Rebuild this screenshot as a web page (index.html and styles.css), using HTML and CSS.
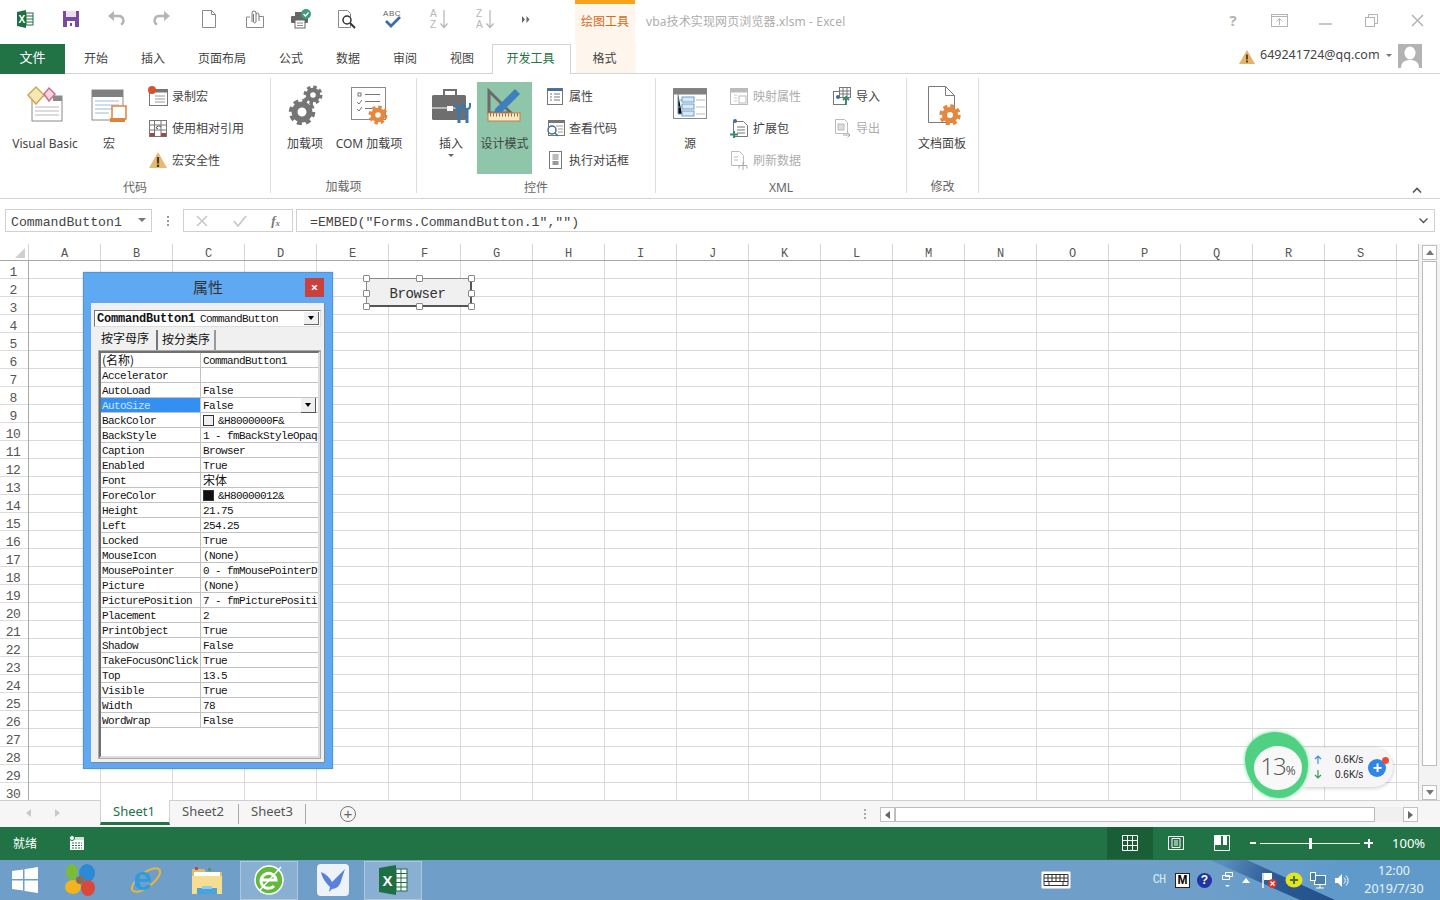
FILE: index.html
```html
<!DOCTYPE html>
<html lang="zh">
<head>
<meta charset="utf-8">
<title>vba技术实现网页浏览器.xlsm - Excel</title>
<link rel="stylesheet" href="styles.css">
</head>
<body>
<div class="app">
  <header class="titlebar">
    <div class="qat">
      <span class="qat-btn"><svg width="20" height="20" viewBox="0 0 20 20"><path fill="#1e6f42" d="M2 3l9-2v18l-9-2z"/><rect x="11" y="4" width="7" height="12" fill="#fff" stroke="#1e6f42"/><path stroke="#1e6f42" d="M11 7h7M11 10h7M11 13h7"/><text x="3.500" y="13.500" class="svg-x" font-size="10">X</text></svg></span>
      <span class="qat-btn"><svg width="18" height="18" viewBox="0 0 18 18"><path fill="#7b4a9e" d="M1 1h16v16H1z"/><rect x="4" y="1" width="10" height="6" fill="#e8e0ee"/><rect x="5" y="11" width="8" height="6" fill="#fff"/><rect x="8" y="13" width="2" height="3" fill="#7b4a9e"/></svg></span>
      <span class="qat-btn"><svg width="20" height="18" viewBox="0 0 20 18"><path fill="none" stroke="#b5b5b5" stroke-width="2.400" d="M4 6h8a4.500 4.500 0 0 1 2 8.500"/><path fill="#b5b5b5" d="M7 1v10L1 6z"/></svg></span>
      <span class="qat-btn qb-redo"><svg width="20" height="18" viewBox="0 0 20 18"><path fill="none" stroke="#b5b5b5" stroke-width="2.400" d="M16 6H8a4.500 4.500 0 0 0-2 8.500"/><path fill="#b5b5b5" d="M13 1v10l6-5z"/></svg></span>
      <span class="qat-btn"><svg width="18" height="20" viewBox="0 0 18 20"><path fill="#fff" stroke="#8a8a8a" d="M2.500 1.500h9l4 4v13h-13z"/><path fill="none" stroke="#8a8a8a" d="M11.500 1.500v4h4"/></svg></span>
      <span class="qat-btn"><svg width="20" height="20" viewBox="0 0 20 20"><path fill="none" stroke="#8a8a8a" d="M5 8H1.500v10.500h17V7.500H14"/><path fill="none" stroke="#777" d="M7 13V4a2 2 0 0 1 4 0v9a1.300 1.300 0 0 1-2.500 0V5M11 5a2 2 0 0 1 3 0v7"/></svg></span>
      <span class="qat-btn"><svg width="22" height="20" viewBox="0 0 22 20"><rect x="5" y="3" width="9" height="5" fill="#666"/><rect x="1" y="7" width="17" height="7" rx="1" fill="#666"/><rect x="5" y="11" width="10" height="8" fill="#fff" stroke="#666"/><path stroke="#888" d="M7 14h6M7 16.500h6"/><circle cx="16" cy="5" r="5" fill="#3f9c7d"/><path fill="none" stroke="#fff" stroke-width="1.300" d="M13.500 5l2 2 3-3.500"/></svg></span>
      <span class="qat-btn"><svg width="20" height="20" viewBox="0 0 20 20"><path fill="#fff" stroke="#8a8a8a" d="M1.500 1.500h9l3 3v14h-12z"/><circle cx="10" cy="11" r="4" fill="#fff" stroke="#333" stroke-width="1.500"/><path stroke="#333" stroke-width="2" d="M13 14l5 5"/></svg></span>
      <span class="qat-btn"><svg width="22" height="22" viewBox="0 0 22 22"><text x="1" y="8" class="svg-abc">ABC</text><path fill="none" stroke="#3c6ea5" stroke-width="2.800" d="M4 13l5 5 9-9"/></svg></span>
      <span class="qat-btn"><svg width="20" height="22" viewBox="0 0 20 22"><text x="1" y="9" class="svg-az">A</text><text x="1" y="20" class="svg-az">Z</text><path fill="none" stroke="#b5b5b5" stroke-width="1.200" d="M15 2v17M11.500 15.500l3.500 4 3.500-4"/></svg></span>
      <span class="qat-btn"><svg width="20" height="22" viewBox="0 0 20 22"><text x="1" y="9" class="svg-az">Z</text><text x="1" y="20" class="svg-az">A</text><path fill="none" stroke="#b5b5b5" stroke-width="1.200" d="M15 2v17M11.500 15.500l3.500 4 3.500-4"/></svg></span>
      <span class="qat-more"><svg width="8" height="7" viewBox="0 0 8 7"><path fill="#666" d="M0 0l3 3.500L0 7zM4.500 0l3 3.500-3 3.500z"/></svg></span>
    </div>
    <div class="ctx-label">绘图工具</div>
    <div class="doc-title">vba技术实现网页浏览器.xlsm - Excel</div>
    <div class="win-ctrls">
      <span class="win-btn help">?</span>
      <span class="win-btn"><svg width="17" height="13" viewBox="0 0 17 13"><rect x=".5" y=".5" width="16" height="12" fill="none" stroke="#b4b4b4"/><path stroke="#b4b4b4" d="M.5 2.500h16"/><path fill="none" stroke="#b4b4b4" d="M8.500 11V5M5.500 7.500l3-3 3 3"/></svg></span>
      <span class="win-btn"><svg width="13" height="12" viewBox="0 0 13 12"><path stroke="#b4b4b4" stroke-width="1.500" d="M0 10h13"/></svg></span>
      <span class="win-btn"><svg width="13" height="13" viewBox="0 0 13 13"><rect x=".5" y="3.500" width="9" height="9" fill="#fff" stroke="#b4b4b4"/><path fill="none" stroke="#b4b4b4" d="M3.500 3.500v-3h9v9h-3"/></svg></span>
      <span class="win-btn"><svg width="13" height="13" viewBox="0 0 13 13"><path stroke="#b4b4b4" stroke-width="1.500" d="M1 1l11 11M12 1L1 12"/></svg></span>
    </div>
  </header>

  <nav class="tabs">
    <div class="tab tab-file">文件</div>
    <div class="tab w62">开始</div>
    <div class="tab w52">插入</div>
    <div class="tab w86">页面布局</div>
    <div class="tab w52">公式</div>
    <div class="tab w62">数据</div>
    <div class="tab w52">审阅</div>
    <div class="tab w62">视图</div>
    <div class="tab tab-active">开发工具</div>
    <div class="tab tab-ctx">格式</div>
    <div class="account">
      <svg width="16" height="14" viewBox="0 0 16 14"><path fill="#e5b26e" d="M8 0l8 14H0z"/><path stroke="#4a3a20" stroke-width="1.800" d="M8 4.500v5M8 10.500v2"/></svg>
      <span class="email">649241724@qq.com</span>
      <span class="acct-arrow"></span>
      <svg class="avatar" width="24" height="24" viewBox="0 0 24 24"><rect width="24" height="24" fill="#b3b3b3"/><ellipse cx="12" cy="9" rx="5.500" ry="6.500" fill="#fff"/><path fill="#fff" d="M3 24c0-6 4-8 9-8s9 2 9 8z"/></svg>
    </div>
  </nav>

  <section class="ribbon">
    <div class="group g1">
      <div class="group-body">
        <div class="big w78">
          <svg class="big-ico" width="40" height="40" viewBox="0 0 40 40"><rect x="7" y="11" width="30" height="25" fill="#fff" stroke="#8a8a8a"/><rect x="28" y="11" width="9" height="5" fill="#8a8a8a"/><path stroke="#b9b9b9" d="M10 22h24M10 26h24M10 30h24"/><path fill="#f7e7b4" stroke="#c9ab5b" stroke-width="1.500" d="M11 2l8 8-8 9-8-9z"/><path fill="#f6d4e0" stroke="#c96f94" stroke-width="1.500" d="M24 3l6 6-6 7-5-7z"/></svg>
          <span class="big-label">Visual Basic</span>
        </div>
        <div class="big w50">
          <svg class="big-ico" width="40" height="40" viewBox="0 0 40 40"><rect x="3" y="5" width="31" height="30" fill="#fff" stroke="#8a8a8a"/><rect x="3" y="5" width="31" height="7" fill="#808080"/><path stroke="#9cbcd6" d="M6 16h24M6 20h24M6 24h24M6 28h14"/><path fill="#fff" stroke="#e0823c" stroke-width="1.500" d="M23 21h14v13H23z"/><rect x="21" y="33" width="15" height="4" fill="#e0823c"/></svg>
          <span class="big-label">宏</span>
        </div>
        <div class="small-col ml14">
          <div class="small"><svg width="20" height="20" viewBox="0 0 20 20"><rect x="1.500" y="3.500" width="18" height="16" fill="#fff" stroke="#777"/><rect x="1.500" y="3.500" width="18" height="3" fill="#777"/><path stroke="#999" d="M7 10h10M7 13h10M7 16h10"/><circle cx="4" cy="4" r="4" fill="#d8532b"/></svg><span>录制宏</span></div>
          <div class="small"><svg width="20" height="20" viewBox="0 0 20 20"><rect x="1.500" y="2.500" width="17" height="16" fill="#fff" stroke="#777"/><path stroke="#777" d="M1.500 7h17M1.500 12h17M6.500 2.500v16M13 2.500v16"/><rect x="2" y="15" width="5" height="3.500" fill="#9c4a4a"/><rect x="13" y="15" width="5" height="3.500" fill="#9c4a4a"/><path fill="none" stroke="#555" d="M13 9a3 3 0 0 0-5 1l2 .5"/></svg><span>使用相对引用</span></div>
          <div class="small"><svg width="20" height="18" viewBox="0 0 20 18"><path fill="#e9b874" d="M10 1l9 16H1z"/><path stroke="#4a3a20" stroke-width="2.200" d="M10 6v6.500M10 13.500v2.500"/></svg><span>宏安全性</span></div>
        </div>
      </div>
      <div class="group-label">代码</div>
    </div>

    <div class="group g2">
      <div class="group-body">
        <div class="big w48">
          <svg class="big-ico" width="40" height="40" viewBox="0 0 40 40"><circle cx="17" cy="27" r="7.500" fill="none" stroke="#757575" stroke-width="6"/><circle cx="17" cy="27" r="11.500" fill="none" stroke="#757575" stroke-width="3.500" stroke-dasharray="5 4.030"/><circle cx="28" cy="10" r="5" fill="none" stroke="#757575" stroke-width="4.500"/><circle cx="28" cy="10" r="8" fill="none" stroke="#757575" stroke-width="3" stroke-dasharray="3.500 2.780"/></svg>
          <span class="big-label">加载项</span>
        </div>
        <div class="big w80">
          <svg class="big-ico" width="40" height="40" viewBox="0 0 40 40"><rect x="2.500" y="2.500" width="34" height="32" fill="#fff" stroke="#8a8a8a"/><rect x="9" y="8" width="3" height="3" fill="#fff" stroke="#777"/><path stroke="#777" d="M16 9.500h15M16 16.500h15M16 23.500h8"/><path fill="none" stroke="#777" d="M8 17l2 2 3-4M8 24l2 2 3-4"/><circle cx="29" cy="30" r="5" fill="#fff" stroke="#e5873d" stroke-width="4.500"/><circle cx="29" cy="30" r="8" fill="none" stroke="#e5873d" stroke-width="3" stroke-dasharray="3.500 2.780"/></svg>
          <span class="big-label">COM 加载项</span>
        </div>
      </div>
      <div class="group-label">加载项</div>
    </div>

    <div class="group g3">
      <div class="group-body">
        <div class="big w52">
          <svg class="big-ico" width="40" height="40" viewBox="0 0 40 40"><path fill="none" stroke="#6e6e6e" stroke-width="2" d="M13 10V5h12v5"/><rect x="1" y="10" width="34" height="25" rx="1.500" fill="#6e6e6e"/><rect x="16" y="21" width="6" height="5" fill="#fff"/><path stroke="#fff" d="M1 23h15M22 23h6"/><path stroke="#3a78ad" stroke-width="3" d="M28 22v16M36 24v14"/><path fill="none" stroke="#3a78ad" stroke-width="2" d="M25 18v3a3 3 0 0 0 6 0v-3M33 18v3a3 3 0 0 0 6 0v-3"/></svg>
          <span class="big-label">插入</span>
          <span class="caret"></span>
        </div>
        <div class="big w55 active">
          <svg class="big-ico" width="40" height="40" viewBox="0 0 40 40"><path fill="none" stroke="#6b6b6b" stroke-width="3" d="M4 6v22h22z"/><path fill="#3d7fc0" d="M10 24L30 4l5 5-20 20-6 2z"/><rect x="3" y="28" width="32" height="8" fill="#f4e9c8" stroke="#c97f3c"/><path stroke="#9a6a30" stroke-dasharray="1 2" stroke-width="3" d="M5 30h28"/></svg>
          <span class="big-label">设计模式</span>
        </div>
        <div class="small-col ml14">
          <div class="small sm"><svg width="18" height="18" viewBox="0 0 18 18"><rect x="1.500" y="1.500" width="15" height="16" fill="#fff" stroke="#777"/><rect x="1.500" y="1.500" width="15" height="2.500" fill="#3c6ea5"/><path stroke="#777" d="M4 7h2M8 7h6M4 10h2M8 10h6M4 13h2M8 13h6"/></svg><span>属性</span></div>
          <div class="small sm-tight"><svg width="20" height="18" viewBox="0 0 20 18"><rect x="2.500" y="1.500" width="16" height="15" fill="#fff" stroke="#777"/><rect x="2.500" y="1.500" width="16" height="2.500" fill="#777"/><path stroke="#999" d="M10 7h7M12 10h5M12 13h5"/><circle cx="6" cy="11" r="4" fill="#fff" stroke="#3f6d8f" stroke-width="1.500"/><path stroke="#3f6d8f" stroke-width="1.500" d="M9 14l3 3"/></svg><span>查看代码</span></div>
          <div class="small sm"><svg width="18" height="20" viewBox="0 0 18 20"><rect x="3.500" y="1.500" width="12" height="17" fill="#fff" stroke="#777"/><path stroke="#777" d="M6.500 5h6M6.500 7h6M6.500 9h6"/><rect x="6.500" y="11" width="6" height="4" fill="#999"/></svg><span>执行对话框</span></div>
        </div>
      </div>
      <div class="group-label">控件</div>
    </div>

    <div class="group g4">
      <div class="group-body">
        <div class="big w48">
          <svg class="big-ico" width="40" height="40" viewBox="0 0 40 40"><rect x="3.500" y="3.500" width="33" height="30" fill="#fff" stroke="#8a8a8a"/><rect x="3.500" y="3.500" width="33" height="6" fill="#808080"/><path stroke="#6a9ec7" d="M8 9v20h4M8 15h4M8 22h4"/><rect x="12" y="12" width="12" height="5" fill="#d9e8f3" stroke="#6a9ec7"/><rect x="12" y="19" width="12" height="5" fill="#d9e8f3" stroke="#6a9ec7"/><rect x="12" y="26" width="12" height="5" fill="#d9e8f3" stroke="#6a9ec7"/><path stroke="#bbb" d="M26 15h9M26 22h9M26 29h9"/></svg>
          <span class="big-label">源</span>
        </div>
        <div class="small-col ml15 w103">
          <div class="small off"><svg width="20" height="20" viewBox="0 0 20 20"><rect x="1.500" y="2.500" width="17" height="16" fill="#fff" stroke="#bbb"/><rect x="1.500" y="2.500" width="17" height="4" fill="#bbb"/><path stroke="#ccc" d="M5 9h3M5 12h3M5 15h3"/><rect x="10" y="10" width="7" height="7" fill="#fff" stroke="#bbb"/></svg><span>映射属性</span></div>
          <div class="small"><svg width="20" height="20" viewBox="0 0 20 20"><path fill="#fff" stroke="#777" d="M4.500 3.500h10l4 4v11h-14z"/><path stroke="#777" d="M8 9h8M8 12h8M8 15h8"/><circle cx="6" cy="3" r="2" fill="#3c6ea5"/><path stroke="#3d8a6a" stroke-width="2" d="M5 13v7M1 16.500h8"/></svg><span>扩展包</span></div>
          <div class="small off"><svg width="20" height="20" viewBox="0 0 20 20"><path fill="#fff" stroke="#bbb" d="M2.500 1.500h8l4 4v10h-12z"/><path stroke="#bbb" d="M5 7h4M5 10h4"/><path stroke="#aaa" d="M14 12v8M10 15.500h8M10 15.500v3M18 15.500v3"/></svg><span>刷新数据</span></div>
        </div>
        <div class="small-col">
          <div class="small"><svg width="20" height="20" viewBox="0 0 20 20"><rect x="1.500" y="5.500" width="13" height="13" fill="#fff" stroke="#777"/><rect x="7.500" y="1.500" width="11" height="10" fill="#fff" stroke="#777"/><path stroke="#777" d="M7.500 5h11M7.500 8h11M11 1.500v10M15 1.500v10"/><circle cx="6" cy="11" r="2" fill="#3c6ea5"/><path stroke="#3d8a6a" stroke-width="2" fill="none" d="M14 19v-8M11 14l3-3 3 3"/></svg><span>导入</span></div>
          <div class="small off"><svg width="20" height="20" viewBox="0 0 20 20"><path fill="#fff" stroke="#bbb" d="M3.500 1.500h9l3 3v11h-12z"/><rect x="6" y="6" width="6" height="6" fill="#ddd" stroke="#bbb"/><path stroke="#aaa" fill="none" d="M11 17h7M15.500 14.500L18 17l-2.500 2.500"/></svg><span>导出</span></div>
        </div>
      </div>
      <div class="group-label">XML</div>
    </div>

    <div class="group g5">
      <div class="group-body">
        <div class="big w56">
          <svg class="big-ico" width="40" height="40" viewBox="0 0 40 40"><path fill="#fff" stroke="#7a7a7a" d="M6.500 1.500h17l9 9v27h-26z"/><path fill="none" stroke="#7a7a7a" d="M23.500 1.500v9h9"/><circle cx="28" cy="30" r="5.500" fill="#fff" stroke="#e5873d" stroke-width="5"/><circle cx="28" cy="30" r="9" fill="none" stroke="#e5873d" stroke-width="3.500" stroke-dasharray="4 3.070"/></svg>
          <span class="big-label">文档面板</span>
        </div>
      </div>
      <div class="group-label">修改</div>
    </div>

    <div class="collapse"><svg width="10" height="6" viewBox="0 0 10 6"><path fill="none" stroke="#555" stroke-width="1.600" d="M1 5.500l4-4 4 4"/></svg></div>
  </section>

  <section class="formula">
    <div class="namebox"><span>CommandButton1</span><i class="down-tri"></i></div>
    <div class="fdots"></div>
    <div class="fxbox">
      <svg width="12" height="12" viewBox="0 0 12 12"><path stroke="#c8c8c8" stroke-width="1.600" d="M1 1l10 10M11 1L1 11"/></svg>
      <svg width="14" height="12" viewBox="0 0 14 12"><path fill="none" stroke="#c8c8c8" stroke-width="1.800" d="M1 6l4 5 8-10"/></svg>
      <span class="fx">f<sub>x</sub></span>
    </div>
    <div class="fbox"><span>=EMBED("Forms.CommandButton.1","")</span><svg width="9" height="6" viewBox="0 0 9 6"><path fill="none" stroke="#555" stroke-width="1.400" d="M.5 .5l4 4 4-4"/></svg></div>
  </section>

  <section class="sheet">
    <div class="sheet-main">
      <div class="col-head">
        <div class="corner"><i></i></div>
        <div class="col">A</div><div class="col">B</div><div class="col">C</div><div class="col">D</div><div class="col">E</div><div class="col">F</div><div class="col">G</div><div class="col">H</div><div class="col">I</div><div class="col">J</div><div class="col">K</div><div class="col">L</div><div class="col">M</div><div class="col">N</div><div class="col">O</div><div class="col">P</div><div class="col">Q</div><div class="col">R</div><div class="col">S</div>
      </div>
      <div class="sheet-body">
        <div class="row-head">
          <div>1</div><div>2</div><div>3</div><div>4</div><div>5</div><div>6</div><div>7</div><div>8</div><div>9</div><div>10</div><div>11</div><div>12</div><div>13</div><div>14</div><div>15</div><div>16</div><div>17</div><div>18</div><div>19</div><div>20</div><div>21</div><div>22</div><div>23</div><div>24</div><div>25</div><div>26</div><div>27</div><div>28</div><div>29</div><div>30</div>
        </div>
        <div class="cells"></div>
      </div>
    </div>
    <div class="vscroll">
      <div class="sb-btn"><i class="tri-up"></i></div>
      <div class="vthumb"></div>
      <div class="sb-btn"><i class="tri-down"></i></div>
    </div>

    <div class="ctl-button">
      <span>Browser</span>
      <i class="hd h-tl"></i><i class="hd h-tc"></i><i class="hd h-tr"></i><i class="hd h-ml"></i><i class="hd h-mr"></i><i class="hd h-bl"></i><i class="hd h-bc"></i><i class="hd h-br"></i>
    </div>

    <div class="props">
      <div class="props-title"><span>属性</span><b class="props-close">×</b></div>
      <div class="props-inner">
        <div class="combo"><b>CommandButton1</b><span>CommandButton</span><i class="combo-btn"><i class="tri-down blk"></i></i></div>
        <div class="prop-tabs"><span class="pt-on">按字母序</span><span class="pt-off">按分类序</span></div>
        <div class="prop-table">
          <div class="pr"><div class="pn cjk">(名称)</div><div class="pv">CommandButton1</div></div>
          <div class="pr"><div class="pn">Accelerator</div><div class="pv"></div></div>
          <div class="pr"><div class="pn">AutoLoad</div><div class="pv">False</div></div>
          <div class="pr"><div class="pn sel">AutoSize</div><div class="pv">False<i class="pv-btn"><i class="tri-down blk"></i></i></div></div>
          <div class="pr"><div class="pn">BackColor</div><div class="pv"><i class="swatch"></i>&amp;H8000000F&amp;</div></div>
          <div class="pr"><div class="pn">BackStyle</div><div class="pv">1 - fmBackStyleOpaq</div></div>
          <div class="pr"><div class="pn">Caption</div><div class="pv">Browser</div></div>
          <div class="pr"><div class="pn">Enabled</div><div class="pv">True</div></div>
          <div class="pr"><div class="pn">Font</div><div class="pv cjk">宋体</div></div>
          <div class="pr"><div class="pn">ForeColor</div><div class="pv"><i class="swatch dark"></i>&amp;H80000012&amp;</div></div>
          <div class="pr"><div class="pn">Height</div><div class="pv">21.75</div></div>
          <div class="pr"><div class="pn">Left</div><div class="pv">254.25</div></div>
          <div class="pr"><div class="pn">Locked</div><div class="pv">True</div></div>
          <div class="pr"><div class="pn">MouseIcon</div><div class="pv">(None)</div></div>
          <div class="pr"><div class="pn">MousePointer</div><div class="pv">0 - fmMousePointerD</div></div>
          <div class="pr"><div class="pn">Picture</div><div class="pv">(None)</div></div>
          <div class="pr"><div class="pn">PicturePosition</div><div class="pv">7 - fmPicturePositi</div></div>
          <div class="pr"><div class="pn">Placement</div><div class="pv">2</div></div>
          <div class="pr"><div class="pn">PrintObject</div><div class="pv">True</div></div>
          <div class="pr"><div class="pn">Shadow</div><div class="pv">False</div></div>
          <div class="pr"><div class="pn">TakeFocusOnClick</div><div class="pv">True</div></div>
          <div class="pr"><div class="pn">Top</div><div class="pv">13.5</div></div>
          <div class="pr"><div class="pn">Visible</div><div class="pv">True</div></div>
          <div class="pr"><div class="pn">Width</div><div class="pv">78</div></div>
          <div class="pr"><div class="pn">WordWrap</div><div class="pv">False</div></div>
        </div>
      </div>
    </div>

    <div class="net-widget">
      <div class="net-pill">
        <div class="net-rows">
          <div class="net-row"><svg width="8" height="9" viewBox="0 0 8 9"><path fill="none" stroke="#3f8fe0" stroke-width="1.200" d="M4 9V1M1 4l3-3 3 3"/></svg><span>0.6K/s</span></div>
          <div class="net-row"><svg width="8" height="9" viewBox="0 0 8 9"><path fill="none" stroke="#2f9e5f" stroke-width="1.200" d="M4 0v8M1 5l3 3 3-3"/></svg><span>0.6K/s</span></div>
        </div>
        <div class="net-plus">+<i></i></div>
      </div>
      <div class="net-ring"><div class="net-core"><span>13</span><small>%</small></div></div>
    </div>
  </section>

  <section class="sheetbar">
    <div class="nav-arrows"><i class="tri-left lt"></i><i class="tri-right lt"></i></div>
    <div class="stab stab-on">Sheet1</div>
    <div class="stab s2">Sheet2</div>
    <div class="stab s3">Sheet3</div>
    <div class="add-sheet">+</div>
    <div class="bar-dots"></div>
    <div class="hscroll">
      <div class="sb-btn"><i class="tri-left"></i></div>
      <div class="hthumb"></div>
      <div class="sb-gap"></div>
      <div class="sb-btn"><i class="tri-right"></i></div>
    </div>
  </section>

  <footer class="status">
    <span class="ready">就绪</span>
    <svg class="macro" width="16" height="16" viewBox="0 0 16 16"><rect x="1" y="2" width="14" height="13" fill="#fff"/><rect x="1" y="2" width="14" height="3" fill="#cfe2d6"/><path stroke="#217346" d="M3 8h10M3 10.500h10M3 13h10" stroke-dasharray="2 1"/><circle cx="3" cy="3" r="2.500" fill="#fff" stroke="#217346"/></svg>
    <div class="views">
      <div class="view view-on"><svg width="16" height="16" viewBox="0 0 16 16"><path fill="none" stroke="#fff" d="M.5 .5h15v15H.5zM.5 5.500h15M.5 10.500h15M5.500 .5v15M10.500 .5v15"/></svg></div>
      <div class="view"><svg width="16" height="14" viewBox="0 0 16 14"><path fill="none" stroke="#fff" d="M.5 .5h15v13H.5z"/><path fill="none" stroke="#fff" d="M4 2.500h8v9H4zM6 5h4M6 7h4M6 9h4"/></svg></div>
      <div class="view"><svg width="16" height="16" viewBox="0 0 16 16"><path fill="none" stroke="#fff" d="M.5 .5h15v15H.5z"/><path fill="#fff" d="M1 1h6v9H1zM9 1h4v9H9z"/></svg></div>
    </div>
    <div class="zoom">
      <i class="z-minus"></i>
      <div class="z-track"><i></i></div>
      <i class="z-plus"></i>
      <span>100%</span>
    </div>
  </footer>

  <footer class="taskbar">
    <div class="task-wedge"></div>
    <div class="task-left">
      <span class="ti"><svg width="28" height="28" viewBox="0 0 28 28"><path fill="#fff" d="M1 5l11-1.600V13H1zM13.500 3.200L27 1v12H13.500zM1 14.500h11v10L1 23zM13.500 14.500H27V27l-13.500-2z"/></svg></span>
      <span class="ti"><svg width="34" height="34" viewBox="0 0 34 34"><ellipse cx="9" cy="9" rx="6" ry="8" fill="#7cba3c"/><ellipse cx="24" cy="10" rx="8" ry="9" fill="#2b8ad6"/><ellipse cx="10" cy="24" rx="8" ry="7" fill="#f0b51e"/><ellipse cx="25" cy="25" rx="7" ry="8" fill="#d9483b"/><circle cx="17" cy="17" r="4" fill="#8d6a52"/></svg></span>
      <span class="ti"><svg class="ie-ico" width="34" height="34" viewBox="0 0 34 34"><ellipse cx="17" cy="17" rx="17" ry="7" transform="rotate(-38 17 17)" fill="none" stroke="#e8b53a" stroke-width="2"/><text x="4" y="27" class="svg-ie">e</text></svg></span>
      <span class="ti"><svg width="34" height="32" viewBox="0 0 34 32"><path fill="#dcbc6c" d="M2 5h12l2 3h16v22H2z"/><path fill="#fff" d="M4 8h26v6H4z"/><path fill="#f6dd92" d="M2 12h30v18H2z"/><rect x="5" y="3" width="3" height="3" fill="#c04a3a"/><rect x="18" y="4" width="3" height="3" fill="#5a9a4a"/><path fill="#4aa3dc" d="M7 24h20v6H7z"/><rect x="12" y="22" width="10" height="3" fill="#8fd0ef"/></svg></span>
      <span class="ti ti-on"><svg width="32" height="32" viewBox="0 0 32 32"><circle cx="16" cy="16" r="14" fill="#62b93a" stroke="#fff" stroke-width="1.500"/><path fill="none" stroke="#fff" stroke-width="3" d="M8 16h15a7.500 7.500 0 1 0-2 6"/><path fill="none" stroke="#fff" stroke-width="1.500" d="M7 26L28 3"/></svg></span>
      <span class="ti"><svg width="32" height="32" viewBox="0 0 32 32"><rect width="32" height="32" rx="4" fill="#eef3fb"/><path fill="#5a7fdc" d="M4 8c5 2 9 6 11 10l13-13-4 12c-1 5-5 8-9 8l-3 3 1-5C9 19 5 14 4 8z"/></svg></span>
      <span class="ti ti-on"><svg width="30" height="32" viewBox="0 0 30 32"><path fill="#1e6f42" d="M1 4l17-3v30L1 28z"/><rect x="18" y="5" width="11" height="22" fill="#fff" stroke="#1e6f42"/><path stroke="#1e6f42" d="M18 9.500h11M18 14h11M18 18.500h11M18 23h11M23 5v22"/><text x="4.500" y="22" class="svg-x" font-size="15">X</text></svg></span>
    </div>
    <div class="tray">
      <svg class="kbd" width="30" height="18" viewBox="0 0 30 18"><rect x=".5" y=".5" width="29" height="17" rx="1" fill="#fff"/><path fill="none" stroke="#333" d="M3 3.500h24v11H3zM3 7h24M3 10.500h24M7 3.500v7M11 3.500v7M15 3.500v7M19 3.500v7M23 3.500v7M8 10.500v4M22 10.500v4"/></svg>
      <span class="ch">CH</span>
      <span class="ime-m">M</span>
      <span class="ime-q">?</span>
      <svg class="t-restore" width="11" height="16" viewBox="0 0 11 16"><path fill="none" stroke="#fff" d="M3.500 .5h7v4h-7zM.5 3.500h7v4h-7z"/><path fill="#fff" d="M3 13h5l-2.500 2z"/></svg>
      <i class="t-up"></i>
      <svg class="t-flag" width="17" height="17" viewBox="0 0 17 17"><path stroke="#fff" stroke-width="1.500" d="M2 1v15"/><path fill="#fff" d="M3 1h8v7H3z"/><circle cx="11.500" cy="11.500" r="4.500" fill="#d9342c"/><path stroke="#fff" stroke-width="1.200" d="M9.500 9.500l4 4M13.500 9.500l-4 4"/></svg>
      <svg class="t-plus" width="18" height="16" viewBox="0 0 18 16"><ellipse cx="9" cy="8" rx="8.500" ry="7.500" fill="#e7e31e"/><path stroke="#3a7a24" stroke-width="2" d="M9 4v8M5 8h8"/></svg>
      <svg class="t-net" width="16" height="17" viewBox="0 0 16 17"><rect x="4.500" y="3.500" width="11" height="9" fill="#4a7fa8" stroke="#fff"/><rect x=".5" y=".5" width="5" height="8" fill="#4a7fa8" stroke="#fff"/><path stroke="#fff" d="M10 13v3M6 16h8"/></svg>
      <svg class="t-vol" width="15" height="15" viewBox="0 0 15 15"><path fill="#fff" d="M1 5h3l4-4v13l-4-4H1z"/><path fill="none" stroke="#fff" d="M10 4.500a4 4 0 0 1 0 6M12 2.500a7 7 0 0 1 0 10"/></svg>
      <div class="clock"><span>12:00</span><span>2019/7/30</span></div>
    </div>
  </footer>
</div>
</body>
</html>
```
FILE: styles.css
```css
* { box-sizing: border-box; }
html, body { margin: 0; padding: 0; }
body {
  width: 1440px;
  height: 900px;
  overflow: hidden;
  background: #fff;
  color: #444;
  font-family: "Noto Sans", "Noto Sans CJK SC", sans-serif;
  font-size: 12px;
}
i { font-style: normal; display: block; }
svg { display: block; flex: none; }

.app { width: 1440px; height: 900px; display: flex; flex-direction: column; }

.svg-x { font-family: "Liberation Sans", sans-serif; font-weight: 700; fill: #fff; }
.svg-abc { font-family: "Liberation Sans", sans-serif; font-size: 8px; letter-spacing: .6px; fill: #666; }
.svg-az { font-family: "Liberation Sans", sans-serif; font-size: 10px; fill: #b5b5b5; }
.svg-ie { font-family: "Liberation Sans", sans-serif; font-size: 34px; font-weight: 700; fill: #2f9be0; }
.ie-ico { overflow: visible; }

/* title bar */
.titlebar { height: 44px; display: flex; flex: none; }
.qat { width: 575px; display: flex; align-items: flex-start; padding: 9px 0 0 2px; }
.qat-btn { width: 46px; height: 20px; display: flex; align-items: center; justify-content: center; }
.qb-redo { margin-left: -2px; margin-right: 2px; }
.qat-more { margin: 7px 0 0 14px; width: 8px; }
.ctx-label {
  width: 60px; border-top: 4px solid #f9a21b; background: #fef6ec;
  color: #d9691f; text-align: center; line-height: 36px; font-size: 12px;
}
.doc-title { padding: 13px 0 0 11px; color: #adadad; font-size: 12px; line-height: 18px; letter-spacing: .12px; }
.win-ctrls { margin-left: auto; width: 230px; display: flex; }
.win-btn { width: 46px; height: 40px; display: flex; align-items: center; justify-content: center; }
.win-btn.help { color: #b4b4b4; font-size: 15px; font-weight: 700; }

/* tabs */
.tabs { height: 30px; display: flex; flex: none; border-bottom: 1px solid #d4d4d4; }
.tab { height: 30px; line-height: 29px; text-align: center; color: #444; font-size: 12px; }
.tab-file { width: 65px; background: #217346; color: #fff; font-size: 13px; line-height: 27px; }
.w62 { width: 62px; } .w52 { width: 52px; } .w86 { width: 86px; }
.tab-active { width: 79px; margin-left: -1px; padding-right: 2px; color: #217346; background: #fff; border: 1px solid #d4d4d4; border-bottom: 0; line-height: 28px; }
.tab-ctx { width: 60px; margin-left: 5px; padding-right: 3px; background: #fef6ec; height: 29px; }
.account { margin-left: auto; width: 202px; display: flex; align-items: flex-start; }
.account > svg:first-child { margin: 6px 5px 0 1px; }
.email { font-size: 12.500px; line-height: 22px; color: #444; }
.acct-arrow { width: 0; height: 0; border: 3px solid transparent; border-top-color: #777; margin: 10px 6px 0 6px; }
.avatar { margin: 0; }

/* ribbon */
.ribbon { height: 125px; flex: none; display: flex; border-bottom: 1px solid #d4d4d4; position: relative; }
.group { height: 115px; margin-top: 4px; padding-top: 2px; border-right: 1px solid #dedede; display: flex; flex-direction: column; }
.g1 { width: 271px; padding-left: 6px; }
.g2 { width: 146px; padding-left: 10px; }
.g3 { width: 239px; padding-left: 8px; }
.g4 { width: 251px; padding-left: 10px; }
.g5 { width: 72px; padding-left: 7px; }
.group-body { height: 96px; display: flex; }
.group-label { padding-top: 6px; line-height: 12px; text-align: center; color: #666; margin-left: -6px; }
.g2 .group-label, .g4 .group-label { margin-left: -10px; }
.g3 .group-label { margin-left: -8px; }
.g5 .group-label { margin-left: -7px; }
.big { height: 92px; margin-top: 2px; display: flex; flex-direction: column; align-items: center; padding-top: 3px; }
.big-ico { margin-bottom: 10px; }
.big-label { line-height: 18px; color: #444; white-space: nowrap; }
.w78 { width: 78px; } .w50 { width: 50px; } .w48 { width: 48px; } .w80 { width: 80px; } .w55 { width: 55px; } .w56 { width: 56px; } .w103 { width: 103px; }
.active { background: #8fc6a9; }
.caret { width: 0; height: 0; border: 3px solid transparent; border-top-color: #666; margin-top: 1px; }
.small-col { display: flex; flex-direction: column; }
.ml14 { margin-left: 14px; } .ml15 { margin-left: 15px; }
.small { height: 32px; display: flex; align-items: center; gap: 4px; color: #444; white-space: nowrap; }
.small.sm { gap: 5px; }
.small.sm-tight { gap: 3px; }
.small.off { color: #adadad; }
.collapse { position: absolute; left: 1412px; top: 113px; }

/* formula bar */
.formula { height: 45px; flex: none; padding: 10px 5px 0 5px; display: flex; align-items: flex-start; }
.namebox { width: 147px; height: 23px; border: 1px solid #d0d0d0; display: flex; align-items: center; padding: 3px 5px 0; font-family: "Liberation Mono", monospace; font-size: 13.200px; color: #444; }
.down-tri { width: 0; height: 0; border: 4px solid transparent; border-top-color: #777; margin: 0 0 0 auto; }
.fdots { width: 2px; height: 10px; margin: 7px 14px 0 15px; background: repeating-linear-gradient(to bottom, #999 0 2px, transparent 2px 4px); }
.fxbox { width: 110px; height: 23px; border: 1px solid #d0d0d0; display: flex; align-items: center; justify-content: space-between; padding: 0 12px 0 12px; }
.fx { font-family: "Liberation Serif", serif; font-style: italic; font-weight: 700; font-size: 13px; color: #777; line-height: 14px; }
.fx sub { font-size: 9px; line-height: 0; vertical-align: -1px; }
.fbox { width: 1139px; height: 23px; margin-left: 3px; border: 1px solid #d0d0d0; display: flex; align-items: center; justify-content: space-between; padding: 3px 6px 0 13px; font-family: "Liberation Mono", monospace; font-size: 13.200px; color: #444; }
.fbox svg { margin-top: -3px; }

/* sheet */
.sheet { height: 556px; flex: none; display: flex; position: relative; overflow: hidden; }
.sheet-main { width: 1419px; flex: none; display: flex; flex-direction: column; border-right: 1px solid #c4c4c4; }
.col-head { height: 17px; flex: none; display: flex; border-bottom: 1px solid #a8a8a8; }
.corner { width: 29px; border-right: 1px solid #d4d4d4; position: relative; }
.corner i { position: absolute; right: 3px; bottom: 2px; border: 5px solid transparent; border-right-color: #d0d0d0; border-bottom-color: #d0d0d0; }
.col { width: 72px; border-right: 1px solid #d4d4d4; text-align: center; font-family: "Liberation Mono", monospace; font-size: 12px; line-height: 20px; color: #555; }
.sheet-body { flex: 1; display: flex; overflow: hidden; }
.row-head { width: 29px; flex: none; border-right: 1px solid #a8a8a8; }
.row-head div { height: 18px; line-height: 23px; padding-left: 2px; text-align: center; border-bottom: 1px solid #dcdcdc; font-family: "Liberation Mono", monospace; font-size: 13px; letter-spacing: -.6px; color: #555; padding-right: 4px; }
.cells { flex: 1; background-image: linear-gradient(to right, transparent 71px, #d9d9d9 71px), linear-gradient(to bottom, transparent 17px, #d9d9d9 17px); background-size: 72px 18px; }

.vscroll { flex: 1; display: flex; flex-direction: column; align-items: center; padding-top: 1px; background: #f3f3f3; }
.sb-btn { width: 15px; height: 15px; background: #fff; border: 1px solid #c0c0c0; display: flex; align-items: center; justify-content: center; flex: none; }
.vthumb { width: 15px; height: 507px; background: #fff; border: 1px solid #bcbcbc; margin-top: 1px; }
.vscroll .sb-btn:last-child { margin-top: 19px; }
.tri-up { width: 0; height: 0; border: 4px solid transparent; border-top: 0; border-bottom: 5px solid #777; }
.tri-down { width: 0; height: 0; border: 4px solid transparent; border-bottom: 0; border-top: 5px solid #777; }
.tri-left { width: 0; height: 0; border: 4px solid transparent; border-left: 0; border-right: 5px solid #666; }
.tri-right { width: 0; height: 0; border: 4px solid transparent; border-right: 0; border-left: 5px solid #666; }
.tri-left.lt { border-right-color: #c8c8c8; }
.tri-right.lt { border-left-color: #c8c8c8; }
.tri-down.blk { border-width: 4px 3px 0; border-top-color: #000; }

/* embedded control */
.ctl-button {
  position: absolute; left: 366px; top: 34px; width: 106px; height: 29px;
  background: #f0f0f0; border: 1px solid #8a8a8a; border-right: 2px solid #555; border-bottom: 2px solid #555;
  font-family: "Liberation Mono", monospace; font-size: 14px; color: #333; text-align: center; line-height: 30px; letter-spacing: -.4px; padding-right: 2px;
}
.hd { position: absolute; width: 7px; height: 7px; background: #fff; border: 1px solid #8a8a8a; border-radius: 1px; }
.h-tl { left: -4px; top: -4px; } .h-tc { left: 49px; top: -4px; } .h-tr { right: -5px; top: -4px; }
.h-ml { left: -4px; top: 11px; } .h-mr { right: -5px; top: 11px; }
.h-bl { left: -4px; bottom: -5px; } .h-bc { left: 49px; bottom: -5px; } .h-br { right: -5px; bottom: -5px; }

/* properties window */
.props {
  position: absolute; left: 83px; top: 28px; width: 250px; height: 497px;
  background: #5fa9f3; border: 1px solid #4e96dd; box-shadow: 0 0 2px rgba(0,0,0,.25);
  display: flex; flex-direction: column; padding: 0 7px 5px 7px;
}
.props-title { height: 30px; flex: none; display: flex; align-items: center; justify-content: center; position: relative; font-size: 15px; color: #333; padding-bottom: 4px; }
.props-close { position: absolute; right: 1px; top: 5px; width: 19px; height: 19px; background: #c9403f; color: #fff; font-size: 13px; line-height: 18px; text-align: center; font-weight: 700; }
.props-inner { flex: 1; background: #f0f0f0; padding: 7px 4px 5px 3px; display: flex; flex-direction: column; box-shadow: inset -1px -1px 0 #888; }
.combo { height: 17px; flex: none; background: #fff; border: 1px solid #777; border-right-color: #ddd; border-bottom-color: #ddd; display: flex; align-items: center; padding-left: 2px; font-family: "Liberation Mono", monospace; font-size: 11px; letter-spacing: -.6px; color: #111; position: relative; }
.combo b { font-size: 12px; letter-spacing: -.2px; margin-right: 5px; }
.combo-btn { position: absolute; right: 1px; top: 1px; width: 15px; height: 13px; background: #f0f0f0; border-right: 1px solid #666; border-bottom: 1px solid #666; display: flex; align-items: center; justify-content: center; }
.prop-tabs { height: 24px; flex: none; display: flex; font-size: 12px; color: #111; padding: 3px 0 0 7px; }
.pt-on { width: 57px; line-height: 18px; border-right: 2px solid #777; }
.pt-off { width: 58px; line-height: 20px; padding-left: 4px; border-right: 2px solid #999; }
.prop-table { flex: 1; background: #fff; border: 2px solid #6f6f6f; border-right-color: #ddd; border-bottom-color: #ddd; margin: 0 1px 0 5px; outline: 1px solid #aaa; }
.pr { display: flex; height: 15px; border-bottom: 1px solid #c2c2c2; font-family: "Liberation Mono", monospace; font-size: 11px; letter-spacing: -.6px; color: #111; line-height: 16px; position: relative; }
.pn { width: 100px; flex: none; border-right: 1px solid #c2c2c2; padding-left: 1px; white-space: nowrap; }
.pv { flex: 1; padding-left: 2px; white-space: nowrap; overflow: hidden; display: flex; align-items: center; padding-top: 1px; }
.cjk { font-family: "Noto Sans CJK SC", sans-serif; font-size: 12px; letter-spacing: 0; line-height: 14px; overflow: visible; padding-top: 0; }
.sel { background: #3390f0; color: #cfe6ff; }
.swatch { width: 11px; height: 11px; background: #f0f0f0; border: 1px solid #333; margin-right: 4px; flex: none; }
.swatch.dark { background: #111; }
.pv-btn { position: absolute; right: 2px; top: 0; width: 15px; height: 15px; background: #f0f0f0; border-right: 1px solid #555; border-bottom: 1px solid #555; display: flex; align-items: center; justify-content: center; }

/* network widget */
.net-widget { position: absolute; left: 1245px; top: 488px; width: 148px; height: 68px; }
.net-pill { position: absolute; left: 58px; top: 16px; width: 90px; height: 39px; background: #f6f6f8; border-radius: 0 20px 20px 0; box-shadow: 0 1px 4px rgba(0,0,0,.22); display: flex; align-items: center; padding-left: 11px; }
.net-rows { display: flex; flex-direction: column; gap: 3px; margin-top: -1px; }
.net-row { display: flex; align-items: center; gap: 13px; font-family: "Liberation Sans", sans-serif; font-size: 10px; line-height: 12px; color: #222; }
.net-plus { width: 18px; height: 18px; margin-left: 5px; border-radius: 50%; background: #2f86e8; color: #fff; font: 700 16px/18px "Liberation Sans", sans-serif; text-align: center; position: relative; }
.net-plus i { position: absolute; right: -3px; top: -2px; width: 7px; height: 7px; background: #ef4a36; border-radius: 50%; }
.net-ring { position: absolute; left: 0; top: 0; width: 63px; height: 66px; background: #4fd083; border-radius: 48% 52% 46% 54% / 40% 50% 50% 60%; box-shadow: 0 0 3px 1px rgba(120,225,160,.7); display: flex; align-items: flex-end; justify-content: center; padding: 0 0 8px 3px; }
.net-core { width: 48px; height: 44px; border-radius: 50%; background: #f8f8f8; display: flex; align-items: baseline; justify-content: center; padding-top: 5px; color: #555; font-family: "Open Sans", sans-serif; }
.net-core span { font-size: 24px; font-weight: 300; line-height: 30px; letter-spacing: -1px; }
.net-core small { font-size: 12px; }

/* sheet tabs */
.sheetbar { height: 27px; flex: none; display: flex; background: #f6f6f6; border-top: 1px solid #cfcfcf; position: relative; font-size: 13px; }
.nav-arrows { width: 100px; display: flex; gap: 24px; align-items: center; padding: 0 0 2px 26px; }
.stab { height: 22px; line-height: 23px; text-align: center; color: #555; }
.stab-on { width: 70px; height: 25px; margin-top: -1px; padding-right: 2px; background: #fff; color: #217346; border-left: 1px solid #d0d0d0; border-right: 1px solid #d0d0d0; border-bottom: 3px solid #217346; line-height: 22px; }
.s2 { width: 69px; padding-right: 2px; border-right: 1px solid #aaa; margin-top: 3px; line-height: 15px; height: 20px; }
.s3 { width: 67px; border-right: 1px solid #aaa; margin-top: 3px; line-height: 15px; height: 20px; }
.add-sheet { width: 16px; height: 16px; margin: 5px 0 0 34px; border: 1.500px solid #777; border-radius: 50%; font: 400 15px/13px "Liberation Sans", sans-serif; text-align: center; color: #666; }
.bar-dots { width: 2px; height: 10px; margin: 8px 0 0 508px; background: repeating-linear-gradient(to bottom, #aaa 0 2px, transparent 2px 4px); }
.hscroll { margin: 6px 0 0 14px; width: 538px; height: 15px; display: flex; background: #f0f0f0; }
.hthumb { width: 480px; background: #fff; border: 1px solid #bcbcbc; }
.sb-gap { width: 28px; }

/* status bar */
.status { height: 33px; flex: none; background: #217346; color: #fff; display: flex; align-items: center; padding-bottom: 1px; position: relative; }
.ready { margin-left: 13px; font-size: 12px; }
.macro { margin-left: 32px; }
.views { margin-left: 1022px; display: flex; height: 32px; }
.view { width: 46px; height: 32px; display: flex; align-items: center; justify-content: center; }
.view-on { background: #1a5e38; }
.zoom { display: flex; align-items: center; margin-left: 5px; }
.z-minus { width: 6px; height: 2px; background: #fff; }
.z-track { width: 100px; height: 1px; background: #fff; margin: 0 4px 0 4px; position: relative; }
.z-track i { position: absolute; left: 49px; top: -5px; width: 3px; height: 11px; background: #fff; }
.z-plus { width: 9px; height: 9px; background: linear-gradient(#fff, #fff) center/9px 2px no-repeat, linear-gradient(#fff, #fff) center/2px 9px no-repeat; }
.zoom span { margin-left: 19px; font-size: 13px; }

/* taskbar */
.taskbar { height: 40px; flex: 1; display: flex; position: relative; overflow: hidden; background: linear-gradient(to right, #6f9fc9 0, #6f9fc9 1200px, #5f9acb 1340px, #5f9acb 100%); color: #fff; }
.task-wedge { position: absolute; left: 1210px; top: 0; width: 125px; height: 40px; background: linear-gradient(115deg, #5b8dbd 10%, #2b5a92 50%, #23508a 100%); clip-path: polygon(0 0, 37px 0, 100% 100%, 90px 100%); }
.task-left { display: flex; align-items: center; position: relative; height: 40px; }
.ti { width: 62px; height: 38px; display: flex; align-items: center; justify-content: center; flex: none; }
.ti:first-child { width: 50px; }
.ti:nth-child(2) { width: 60px; }
.ti:nth-child(3) { width: 72px; }
.ti:nth-child(4) { width: 50px; margin-right: 8px; }
.ti-on { width: 58px; height: 39px; background: rgba(255,255,255,.18); border: 1px solid rgba(255,255,255,.3); }
.ti:nth-child(5) { margin-right: 4px; }
.ti:nth-child(6) { width: 62px; }
.tray { position: absolute; left: 1041px; top: 0; height: 40px; width: 399px; display: flex; align-items: center; }
.ch { width: 22px; font-family: "Liberation Mono", monospace; font-size: 12px; color: #dbe9f5; text-align: center; letter-spacing: -1px; margin-left: 77px; }
.kbd { margin-left: 0; }
.ime-m { width: 15px; height: 15px; margin-left: 5px; background: #fff; border: 1px solid #222; color: #000; font: 700 12px/13px "Liberation Sans", sans-serif; text-align: center; }
.ime-q { width: 15px; height: 15px; margin-left: 7px; border-radius: 50%; background: #2035a0; color: #fff; font: 700 12px/15px "Liberation Sans", sans-serif; text-align: center; }
.t-restore { margin-left: 10px; }
.t-up { width: 0; height: 0; border: 4px solid transparent; border-top: 0; border-bottom: 5px solid #fff; margin-left: 9px; }
.t-flag { margin-left: 11px; }
.t-plus { margin-left: 7px; }
.t-net { margin-left: 7px; }
.t-vol { margin-left: 8px; }
.clock { margin-left: 8px; width: 74px; display: flex; flex-direction: column; align-items: center; font-size: 12.500px; line-height: 18px; color: #e9f2fa; }
```
